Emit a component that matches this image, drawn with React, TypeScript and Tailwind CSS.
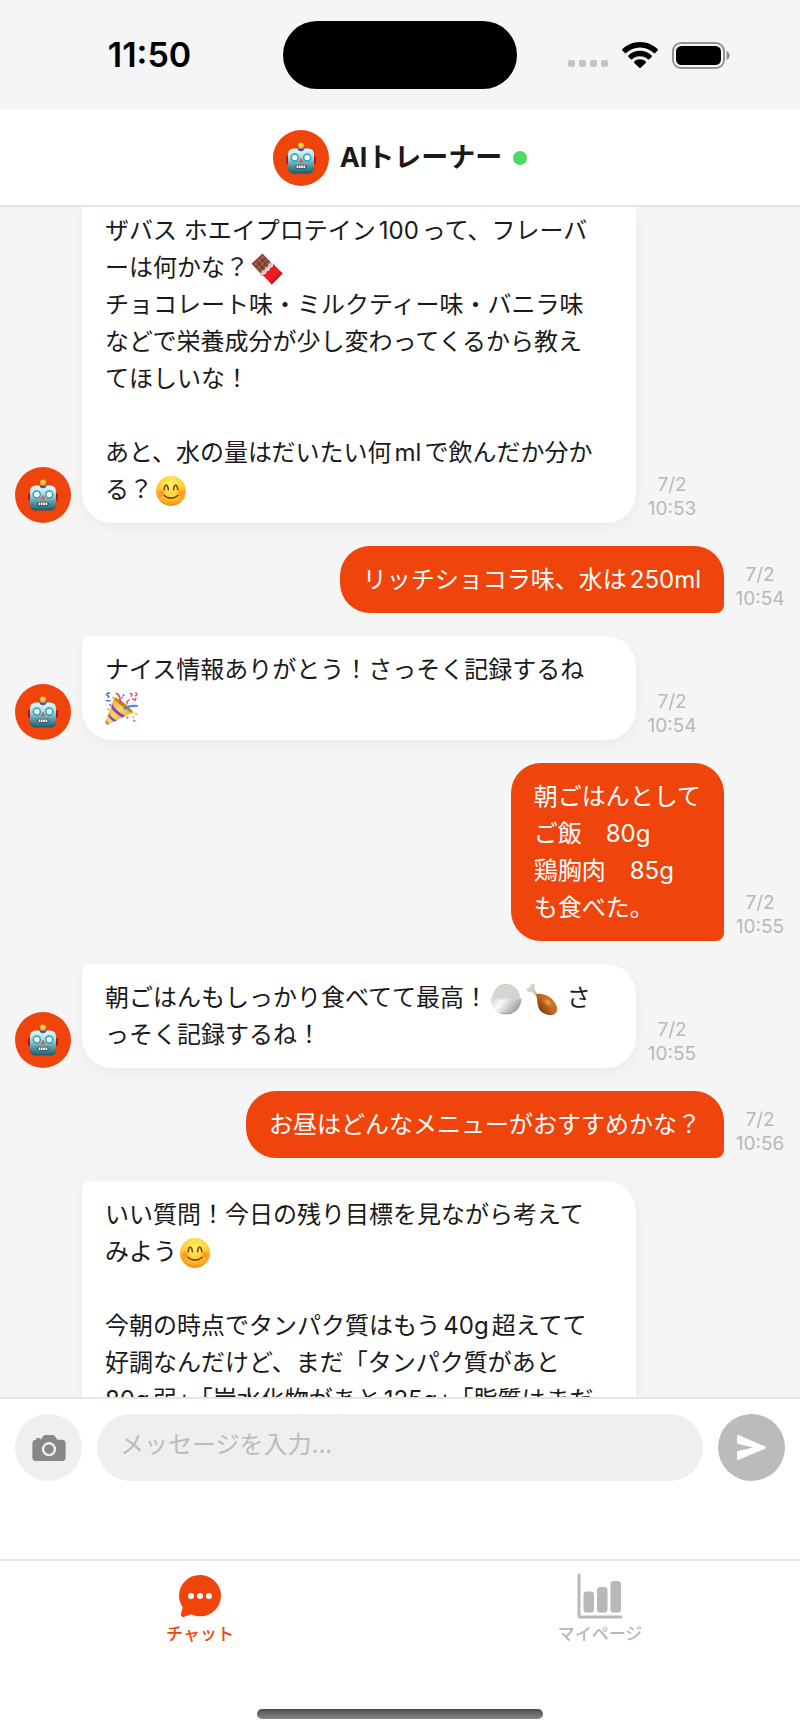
import { Fragment } from "react";
import type { ComponentType, ReactNode } from "react";
import { IoBarChart, IoCamera, IoChatbubbleEllipses } from "react-icons/io5";
import { clsx } from "clsx";

// 絵文字
function RobotEmoji() {
  return (
    <svg viewBox="0 0 32 32" className="h-8 w-8" role="img" aria-label="ロボット">
      <defs>
        <linearGradient id="robotFace" x1="0" y1="0" x2="0" y2="1">
          <stop offset="0" stopColor="#e2fbfb" />
          <stop offset="0.35" stopColor="#b4dede" />
          <stop offset="0.75" stopColor="#4f93a0" />
          <stop offset="1" stopColor="#226878" />
        </linearGradient>
      </defs>
      <rect x="1" y="14" width="4" height="8" rx="2" fill="#a3182c" />
      <rect x="27" y="14" width="4" height="8" rx="2" fill="#a3182c" />
      <ellipse cx="16" cy="6" rx="3.6" ry="3" fill="#6b3a78" />
      <circle cx="16" cy="3.4" r="3" fill="#ffbe1d" />
      <circle cx="15.600" cy="2.500" r="1.300" fill="#fff07a" />
      <rect x="3" y="6.800" width="26" height="24.700" rx="5.500" fill="#1c5f6e" />
      <rect x="3" y="6.500" width="26" height="23.800" rx="5.500" fill="url(#robotFace)" />
      <path d="M12.500 6.500h7c0 2-1.600 2.700-3.500 2.700s-3.500-.7-3.500-2.700z" fill="#5d4a86" />
      <circle cx="9.800" cy="15.600" r="3.500" fill="#fff" stroke="#1fa3c4" strokeWidth="1.500" />
      <circle cx="22.200" cy="15.600" r="3.500" fill="#fff" stroke="#1fa3c4" strokeWidth="1.500" />
      <path d="M16 15.600l2.600 4.700h-5.200z" fill="#f0524a" />
      <rect x="10.200" y="22.700" width="11.600" height="4" rx="2" fill="#3d4f55" />
      <path d="M11.600 24.700h8.800" stroke="#fff" strokeWidth="2.400" strokeDasharray="1.700 0.600" />
    </svg>
  );
}

function SmileEmoji() {
  return (
    <svg viewBox="0 0 32 32" className="mx-0.5 inline-block h-8 w-8 align-middle" role="img" aria-label="笑顔">
      <defs>
        <radialGradient id="smileFace" cx="0.5" cy="0.3" r="0.72">
          <stop offset="0" stopColor="#fff36b" />
          <stop offset="0.55" stopColor="#ffd035" />
          <stop offset="0.85" stopColor="#fba51c" />
          <stop offset="1" stopColor="#dd7f10" />
        </radialGradient>
        <radialGradient id="smileCheek">
          <stop offset="0" stopColor="#ff6a1f" stopOpacity="0.75" />
          <stop offset="1" stopColor="#ff7a1f" stopOpacity="0" />
        </radialGradient>
      </defs>
      <circle cx="16" cy="16" r="15" fill="url(#smileFace)" />
      <circle cx="6" cy="18" r="5" fill="url(#smileCheek)" />
      <circle cx="26" cy="18" r="5" fill="url(#smileCheek)" />
      <g fill="none" stroke="#7a4108" strokeLinecap="round">
        <path d="M9.200 14.800c.2-3.400 1-4.600 2-4.600s1.900 1.200 2.200 4.600M18.600 14.800c.2-3.400 1-4.600 2-4.600s1.900 1.200 2.200 4.600" strokeWidth="1.600" />
        <path d="M9 20.200c3.400 3.800 10.600 3.800 14 0" strokeWidth="1.500" />
      </g>
    </svg>
  );
}

function ChocolateEmoji() {
  return (
    <svg viewBox="0 0 32 32" className="mx-0.5 inline-block h-8 w-8 align-middle" role="img" aria-label="チョコレート">
      <path d="M11.500.5L20.800 10.500 10.200 21 .5 10.800z" fill="#7c4131" />
      <path d="M11.500 1.800l8 8.600-9.200 9.200-8.300-8.800z" fill="#9a5a42" />
      <path d="M8.400 4.200l8.900 9.500M5.100 7.500l8.500 9.300M14.600 4.700l-9.500 9.600M17.600 7.800l-9.300 9.400" stroke="#5f2d21" strokeWidth="0.900" />
      <path d="M20.200 9.300l2.400 2.400L12 23.800l-2.800-1.500 1.200-3.600 1-1.200 1.900-.2 1.400-3.200 2-.2.8-3z" fill="#c9cbd0" />
      <path d="M22 10.600L31.600 20.600 20.800 31.400 11.200 21.600l3-.6 1-3 2.600-.4 1-3.100 2.300-.6z" fill="#ee1c25" />
      <path d="M31.600 20.600L20.800 31.400l-2.200-2.200L29.600 18.500z" fill="#d3141f" />
      <path d="M11.500 21.200l3-.8 1-2.800 2.400-.6 1-2.800 2.400-.8.6-2.600" fill="none" stroke="#f3f3f5" strokeWidth="1" />
    </svg>
  );
}

function PartyEmoji() {
  return (
    <svg viewBox="0 0 33 33" className="inline-block h-[33px] w-[33px] align-middle" role="img" aria-label="クラッカー">
      <defs>
        <linearGradient id="partyCone" x1="0" y1="0" x2="1" y2="1">
          <stop offset="0" stopColor="#d8a526" />
          <stop offset="0.5" stopColor="#f9d95a" />
          <stop offset="1" stopColor="#d39a1f" />
        </linearGradient>
      </defs>
      <path d="M9 6c5.500 1.500 15 9 18.500 14.700L3.500 32.500c-2 .6-3.600-.8-3.200-2.900z" fill="url(#partyCone)" />
      <path d="M7.300 12c2.200 4.500 7.700 9.300 13 11.900l-3 1.500C12.500 23.200 8.200 19.200 6.400 15.700zM4.200 21.300c1.200 3 4.500 6 7.800 7.100l-2.400 1.200c-2.700-1-5.200-3.200-6.200-5.600z" fill="#8f3fd1" />
      <path d="M.7 28.500c1.300.6 3 2.200 3.500 3.700-2.200 1-4.500-.6-3.500-3.700z" fill="#b070e0" />
      <path d="M9 6c2-1 8 3 12.500 7s7.500 7 6 7.700S20 17 15.600 13.200 8 7 9 6z" fill="#c08a1b" />
      <g fill="none" strokeLinecap="round">
        <path d="M11.500 1.500c3 1 4 3.500 3.800 10" stroke="#f03a72" strokeWidth="1.700" />
        <path d="M22 12V9.500l2.200-1.600M25.500 1.500c1.500-.5 2 1.800.6 2.600M27.600 6.800l2.600 1.500.8-2M30.800.8c1.500.8 1.200 2.400-.4 3" stroke="#ec4278" strokeWidth="1.400" />
        <path d="M19.500 16.500c3.500-2.600 8-3 13-2.600" stroke="#3b82f0" strokeWidth="1.900" />
        <path d="M4.500 1C1.500 1 1 2.600 2.400 3.300S4.500 5 3 5.400M1.200 8.700C2.800 7.400 3.800 9.300 5.200 8.800" stroke="#2c6be0" strokeWidth="1.300" />
      </g>
      <g fill="#3b7de8">
        <circle cx="22.500" cy="25.500" r="1.100" />
        <circle cx="5.300" cy="13" r="1.100" />
        <circle cx="17" cy="5.500" r="1" />
        <circle cx="18.500" cy="3.200" r="1" />
      </g>
      <g fill="#f4a93a">
        <circle cx="27.500" cy="20.500" r="1.100" />
        <circle cx="31" cy="22" r="1.100" />
        <circle cx="28.500" cy="25" r="1.100" />
        <circle cx="8" cy="5.500" r="1" />
      </g>
      <g fill="#ee6fa5">
        <circle cx="29.300" cy="28.700" r="1.300" />
        <circle cx="3" cy="17.300" r="1" />
      </g>
    </svg>
  );
}

function RiceEmoji() {
  return (
    <svg viewBox="0 0 32 32" className="mx-0.5 inline-block h-8 w-8 align-middle" role="img" aria-label="ごはん">
      <defs>
        <linearGradient id="riceBowl" x1="0" y1="0" x2="1" y2="0.4">
          <stop offset="0" stopColor="#d8d8d8" />
          <stop offset="0.4" stopColor="#f8f8f8" />
          <stop offset="1" stopColor="#9c9c9c" />
        </linearGradient>
        <pattern id="riceGrain" width="4" height="3.400" patternUnits="userSpaceOnUse" patternTransform="rotate(17)">
          <rect width="4" height="3.400" fill="#d3d0ca" />
          <ellipse cx="1" cy="0.900" rx="0.950" ry="0.500" fill="#eeece8" transform="rotate(30 1 0.900)" />
          <ellipse cx="3" cy="2.400" rx="0.950" ry="0.500" fill="#eeece8" transform="rotate(-40 3 2.400)" />
          <circle cx="3" cy="0.700" r="0.350" fill="#bab6af" />
          <circle cx="1" cy="2.500" r="0.350" fill="#bab6af" />
        </pattern>
      </defs>
      <path d="M2 16C1.500 11.500 3.500 8 6.500 5 9 2 12 .8 16 .8S23.500 2 26 5c3 3 4.500 6.500 4 11z" fill="url(#riceGrain)" />
      <path d="M.5 15.500h31c-.2 7.500-4 13-9.500 14.800-1 1.200-11 1.200-12 0C4.500 28.500.7 23 .5 15.500z" fill="url(#riceBowl)" />
      <path d="M.8 15.800h30.400" stroke="#d6d6d6" strokeWidth="0.800" />
      <path d="M10 30c2 .8 10 .8 12 0" fill="none" stroke="#9c9c9c" strokeWidth="0.900" />
    </svg>
  );
}

function ChickenEmoji() {
  return (
    <svg viewBox="0 0 32 32" className="mx-0.5 inline-block h-8 w-8 align-middle" role="img" aria-label="鶏肉">
      <defs>
        <linearGradient id="chickenMeat" x1="1" y1="0.2" x2="0.1" y2="0.9">
          <stop offset="0" stopColor="#d9822f" />
          <stop offset="0.5" stopColor="#bd6820" />
          <stop offset="1" stopColor="#6e3009" />
        </linearGradient>
        <radialGradient id="chickenShine">
          <stop offset="0" stopColor="#f3b264" stopOpacity="0.900" />
          <stop offset="1" stopColor="#e0903c" stopOpacity="0" />
        </radialGradient>
      </defs>
      <path d="M.8 7.300C0 5 1.800 3.900 4 4.600 3.800 2 5.400.2 7.500.8c2 .7 1.900 3.200 1 5.200l4 6-3 1.800L6 9c-1.800 1-4.500.4-5.200-1.700z" fill="#dcd4c6" />
      <path d="M5.500 5.500l5 6.500" stroke="#b8ab96" strokeWidth="0.800" />
      <path d="M10 11.200c5-1.400 12 .7 16.500 5.300 5.200 5.200 6 11.500 2.600 14.200-3.800 3-12 .8-15.600-4C11 22.500 11.700 17 10 11.200z" fill="url(#chickenMeat)" />
      <ellipse cx="22" cy="19.500" rx="6.500" ry="4" transform="rotate(42 22 19.500)" fill="url(#chickenShine)" />
    </svg>
  );
}

function WifiIcon() {
  return (
    <svg viewBox="0 0 36 26" className="h-[26px] w-9" aria-hidden="true">
      <path d="M18 0c7 0 13.200 2.800 17.600 7.100.4.400.4 1 0 1.400l-2.500 2.500c-.4.400-1 .4-1.400 0C28.200 7.600 23.400 5.500 18 5.500S7.800 7.600 4.300 11c-.4.400-1 .4-1.400 0L.4 8.500C0 8.100 0 7.500.4 7.100 4.800 2.800 11 0 18 0z" />
      <path d="M18 8.700c4.600 0 8.700 1.800 11.700 4.700.4.400.4 1 0 1.400l-2.500 2.500c-.4.400-1 .4-1.400 0-2-1.900-4.800-3.100-7.800-3.100s-5.800 1.200-7.800 3.100c-.4.400-1 .4-1.400 0l-2.500-2.500c-.4-.4-.4-1 0-1.400 3-2.900 7.100-4.700 11.700-4.700z" />
      <path d="M18 17.300c2.200 0 4.200.8 5.700 2.200.4.400.4 1 0 1.400l-5 4.800c-.4.400-1 .4-1.400 0l-5-4.800c-.4-.4-.4-1 0-1.400 1.500-1.400 3.500-2.200 5.700-2.200z" />
    </svg>
  );
}

function BatteryIcon() {
  return (
    <svg viewBox="0 0 58 27" className="h-[27px] w-[58px]" aria-hidden="true">
      <rect x="1" y="1" width="51" height="25" rx="8" fill="none" stroke="#939393" strokeWidth="2" />
      <rect x="4" y="4" width="45" height="19" rx="5.500" />
      <path d="M54.500 9c2 .8 3.200 2.500 3.200 4.500s-1.200 3.700-3.200 4.500z" fill="#939393" />
    </svg>
  );
}

function SendIcon() {
  return (
    <svg viewBox="0 0 29 25" className="h-[25px] w-[29px]" fill="currentColor" aria-hidden="true">
      <path d="M2 .2L27.800 11.300c1.200.5 1.200 1.900 0 2.400L2 24.800c-1 .4-2-.2-2-1.300v-6.200c0-.8.5-1.300 1.200-1.400l14.200-3.100c.4-.1.400-.5 0-.6L1.200 9.100C.5 9 0 8.500 0 7.700V1.500C0 .4 1-.2 2 .2z" />
    </svg>
  );
}

interface Message {
  from: "bot" | "user";
  time?: string;
  lines: ReactNode[];
  continued?: boolean;
}

const messages: Message[] = [
  {
    from: "bot",
    time: "10:53",
    continued: true,
    lines: [
      "ザバス ホエイプロテイン100って、フレーバ",
      <>ーは何かな？<ChocolateEmoji /></>,
      "チョコレート味・ミルクティー味・バニラ味",
      "などで栄養成分が少し変わってくるから教え",
      "てほしいな！",
      "",
      "あと、水の量はだいたい何mlで飲んだか分か",
      <>る？<SmileEmoji /></>,
    ],
  },
  { from: "user", time: "10:54", lines: ["リッチショコラ味、水は250ml"] },
  { from: "bot", time: "10:54", lines: ["ナイス情報ありがとう！さっそく記録するね", <PartyEmoji />] },
  { from: "user", time: "10:55", lines: ["朝ごはんとして", "ご飯　80g", "鶏胸肉　85g", "も食べた。"] },
  {
    from: "bot",
    time: "10:55",
    lines: [<>朝ごはんもしっかり食べてて最高！<RiceEmoji /><ChickenEmoji /> さ</>, "っそく記録するね！"],
  },
  { from: "user", time: "10:56", lines: ["お昼はどんなメニューがおすすめかな？"] },
  {
    from: "bot",
    lines: [
      "いい質問！今日の残り目標を見ながら考えて",
      <>みよう<SmileEmoji /></>,
      "",
      "今朝の時点でタンパク質はもう40g超えてて",
      "好調なんだけど、まだ「タンパク質があと",
      "80g弱」「炭水化物があと125g」「脂質はまだ",
      "",
      "",
      "",
    ],
  },
];

function Avatar() {
  return (
    <span className="flex h-14 w-14 shrink-0 items-center justify-center rounded-full bg-[#ef440c]">
      <RobotEmoji />
    </span>
  );
}

function MessageRow({ message }: { message: Message }) {
  const isBot = message.from === "bot";

  return (
    <li className={clsx("flex items-end gap-[11px]", !isBot && "justify-end")}>
      {isBot && <Avatar />}
      <p
        className={clsx(
          "px-[23px] text-2xl leading-[37px] whitespace-pre [text-autospace:normal]",
          isBot ? "w-[554px] bg-white text-[#1a1a1a] shadow-[0_4px_16px_rgba(0,0,0,0.05)]" : "bg-[#ef440c] text-white",
          message.continued ? "rounded-b-[30px] pt-[5px] pb-[15px]" : "rounded-[30px] py-[15px]",
          isBot && !message.continued && "rounded-tl-[8px]",
          !isBot && "rounded-br-[8px]"
        )}
      >
        {message.lines.map((line, index) => (
          <Fragment key={index}>
            {index > 0 && "\n"}
            {line}
          </Fragment>
        ))}
      </p>
      {message.time && (
        <time className="w-[50px] pb-0.5 text-center text-[19px] leading-6 text-[#b8b8b8]">
          7/2
          <br />
          {message.time}
        </time>
      )}
    </li>
  );
}

interface TabProps {
  label: string;
  icon: ComponentType<{ className?: string }>;
  active?: boolean;
}

function Tab({ label, icon: Icon, active }: TabProps) {
  return (
    <a
      href="#"
      aria-current={active ? "page" : undefined}
      className={clsx(
        "flex flex-1 flex-col items-center gap-0.5 pt-[11px] text-[17px] leading-6 font-medium",
        active ? "text-[#ef440c]" : "text-[#b8b8b8]"
      )}
    >
      <Icon className="h-12 w-12" />
      {label}
    </a>
  );
}

export default function App() {
  return (
    <div className="flex h-screen flex-col overflow-hidden bg-[#f5f5f5] font-['Inter','Noto_Sans_CJK_JP',sans-serif]">
      {/* ステータスバー */}
      <div className="grid h-[110px] shrink-0 grid-cols-[1fr_234px_1fr] items-center text-black">
        <span className="pl-4 text-center text-[34px] leading-10 font-semibold">11:50</span>
        <span className="h-[68px] rounded-full bg-black" />
        <div className="flex items-center justify-end gap-3.5 pr-[70px]">
          <div className="flex gap-1 self-end pb-0.5">
            {[0, 1, 2, 3].map((dot) => (
              <span key={dot} className="h-[7px] w-[7px] rounded-[2px] bg-[#c4c4c4]" />
            ))}
          </div>
          <WifiIcon />
          <BatteryIcon />
        </div>
      </div>

      {/* ヘッダー */}
      <header className="flex h-[97px] shrink-0 items-center justify-center gap-[11px] border-b-2 border-[#e5e5e5] bg-white">
        <Avatar />
        <h1 className="text-[27px] leading-8 font-bold text-[#1a1a1a]">AIトレーナー</h1>
        <span className="h-3.5 w-3.5 rounded-full bg-[#4cd964]" />
      </header>

      {/* メッセージ一覧 */}
      <main className="min-h-0 flex-1 overflow-hidden">
        <ul className="flex flex-col gap-[23px] px-[15px]">
          {messages.map((message, index) => (
            <MessageRow key={index} message={message} />
          ))}
        </ul>
      </main>

      {/* 入力欄 */}
      <form className="flex h-[162px] shrink-0 items-start gap-[15px] border-t-2 border-[#e5e5e5] bg-white px-[15px] pt-[15px]">
        <button
          type="button"
          aria-label="写真を追加"
          className="flex h-[67px] w-[67px] shrink-0 items-center justify-center rounded-full bg-[#efefef] text-[#888]"
        >
          <IoCamera className="h-[38px] w-[38px]" />
        </button>
        <input
          type="text"
          aria-label="メッセージ"
          placeholder="メッセージを入力..."
          className="h-[67px] min-w-0 flex-1 rounded-full bg-[#efefef] px-[23px] pb-1.5 text-2xl text-[#1a1a1a] outline-none placeholder:text-[#bbb]"
        />
        <button
          type="submit"
          aria-label="送信"
          className="flex h-[67px] w-[67px] shrink-0 items-center justify-center rounded-full bg-[#bbb] text-white"
        >
          <SendIcon />
        </button>
      </form>

      {/* タブバー */}
      <nav className="flex h-[150px] shrink-0 border-t-2 border-[#e5e5e5] bg-white">
        <Tab label="チャット" icon={IoChatbubbleEllipses} active />
        <Tab label="マイページ" icon={IoBarChart} />
      </nav>
      <div className="flex h-[25px] shrink-0 justify-center bg-white">
        <span className="h-2.5 w-[286px] rounded-full bg-linear-to-b from-[#4d4d4d] to-[#888]" />
      </div>
    </div>
  );
}
